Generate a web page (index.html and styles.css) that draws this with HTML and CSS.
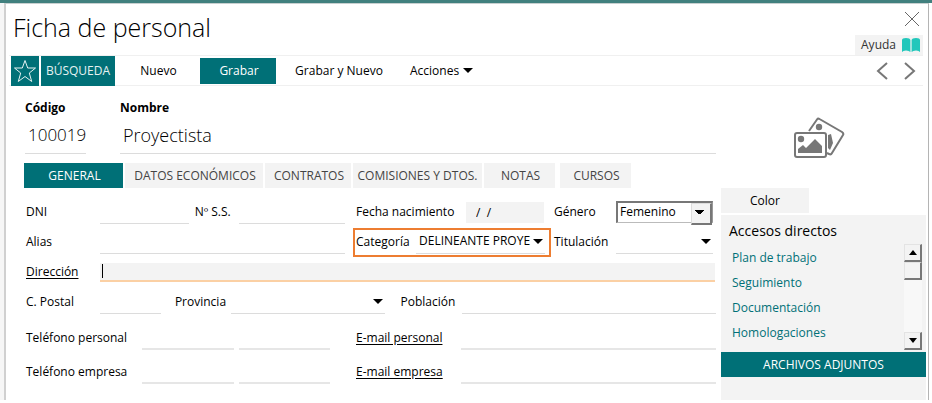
FILE: index.html
```html
<!DOCTYPE html>
<html lang="es">
<head>
    <meta charset="UTF-8">
    <title>Ficha de personal</title>
    <link rel="stylesheet" href="styles.css">
</head>
<body>
<div class="window">
    <!-- Cabecera -->
    <header class="header">
        <h1>Ficha de personal</h1>
        <div class="header-right">
            <button type="button" class="close" aria-label="Cerrar">
                <svg width="16" height="16" viewBox="0 0 16 16"><path d="M1 1L15 15M15 1L1 15"/></svg>
            </button>
            <a href="#" class="help">Ayuda
                <svg width="18" height="14" viewBox="0 0 18 14"><path d="M0 2Q0 0 4 0Q8 0 8.400 2V14Q7 12.500 4 12.500Q1 12.500 0 14ZM18 2Q18 0 14 0Q10 0 9.600 2V14Q11 12.500 14 12.500Q17 12.500 18 14Z"/></svg>
            </a>
        </div>
    </header>

    <!-- Barra de acciones -->
    <nav class="toolbar">
        <button type="button" class="star" aria-label="Favorito">
            <svg width="24" height="24" viewBox="0 0 24 24"><path d="M12 1.500L14.700 9H22.500L16.300 14L18.700 22.500L12 17.500L5.300 22.500L7.700 14L1.500 9H9.300Z"/></svg>
        </button>
        <button type="button" class="search">BÚSQUEDA</button>
        <button type="button" class="action">Nuevo</button>
        <button type="button" class="action save">Grabar</button>
        <button type="button" class="action save-new">Grabar y Nuevo</button>
        <button type="button" class="action menu">Acciones <i class="arrow"></i></button>
        <div class="pager">
            <button type="button" aria-label="Anterior"><svg width="12" height="18" viewBox="0 0 12 18"><path d="M11 1L2 9L11 17"/></svg></button>
            <button type="button" aria-label="Siguiente"><svg width="12" height="18" viewBox="0 0 12 18"><path d="M1 1L10 9L1 17"/></svg></button>
        </div>
    </nav>

    <div class="content">
        <form class="main">
            <div class="identity">
                <div class="id-field code">
                    <label for="codigo">Código</label>
                    <input type="text" id="codigo" value="100019">
                </div>
                <div class="id-field name">
                    <label for="nombre">Nombre</label>
                    <input type="text" id="nombre" value="Proyectista">
                </div>
            </div>

            <!-- Pestañas -->
            <div class="tabs">
                <button type="button" class="tab active">GENERAL</button>
                <button type="button" class="tab economic">DATOS ECONÓMICOS</button>
                <button type="button" class="tab contracts">CONTRATOS</button>
                <button type="button" class="tab fees">COMISIONES Y DTOS.</button>
                <button type="button" class="tab">NOTAS</button>
                <button type="button" class="tab last">CURSOS</button>
            </div>

            <div class="row halves">
                <div class="left">
                    <label for="dni" class="label">DNI</label>
                    <input type="text" id="dni">
                    <label for="nss" class="label-ss">Nº S.S.</label>
                    <input type="text" id="nss" class="nss">
                </div>
                <div class="right pair">
                    <div class="group">
                        <label for="fecha" class="label-date">Fecha nacimiento</label>
                        <input type="text" id="fecha" class="date" value="/  /">
                    </div>
                    <div class="group second">
                        <label for="genero" class="label-short">Género</label>
                        <span class="select boxed">
                            <select id="genero"><option>Femenino</option><option>Masculino</option></select>
                        </span>
                    </div>
                </div>
            </div>

            <div class="row halves">
                <div class="left">
                    <label for="alias" class="label">Alias</label>
                    <input type="text" id="alias">
                </div>
                <div class="right pair">
                    <div class="group marked">
                        <label for="categoria" class="label-cat">Categoría</label>
                        <span class="select">
                            <select id="categoria"><option>DELINEANTE PROYE</option></select>
                        </span>
                    </div>
                    <div class="group second">
                        <label for="titulacion" class="label-short">Titulación</label>
                        <span class="select">
                            <select id="titulacion"><option></option></select>
                        </span>
                    </div>
                </div>
            </div>

            <div class="row address">
                <label for="direccion" class="label link">Dirección</label>
                <span class="caret"><input type="text" id="direccion" class="focused"></span>
            </div>

            <div class="row place">
                <label for="cp" class="label">C. Postal</label>
                <input type="text" id="cp" class="cp">
                <label for="provincia" class="label-prov">Provincia</label>
                <span class="select prov">
                    <select id="provincia"><option></option></select>
                </span>
                <label for="poblacion" class="label-town">Población</label>
                <input type="text" id="poblacion" class="town">
            </div>

            <div class="contact">
                <div class="row halves">
                    <div class="left phones">
                        <label for="tel1" class="label-phone">Teléfono personal</label>
                        <input type="text" id="tel1">
                        <input type="text" aria-label="Teléfono personal 2">
                    </div>
                    <div class="right">
                        <label for="mail1" class="label-mail link">E-mail personal</label>
                        <input type="text" id="mail1">
                    </div>
                </div>
                <div class="row halves">
                    <div class="left phones">
                        <label for="tel2" class="label-phone">Teléfono empresa</label>
                        <input type="text" id="tel2">
                        <input type="text" aria-label="Teléfono empresa 2">
                    </div>
                    <div class="right">
                        <label for="mail2" class="label-mail link">E-mail empresa</label>
                        <input type="text" id="mail2">
                    </div>
                </div>
            </div>
        </form>

        <!-- Lateral -->
        <aside class="side">
            <div class="photo">
                <svg width="52" height="42" viewBox="0 0 52 42">
                    <g class="frame">
                        <path d="M16 14L24 2.500Q25 1 26.500 2L49 15Q51 16.500 50 18L39 36Q38 38 36 37L34 36"/>
                        <rect x="2" y="16" width="31" height="24" rx="2"/>
                    </g>
                    <circle cx="26" cy="10" r="3.200"/>
                    <circle cx="8" cy="22" r="3.200"/>
                    <path d="M5 36V32L10 28L13 31L22 22L29 29V36ZM35 18L38 17L40 26L37 33L35 31Z"/>
                </svg>
            </div>
            <button type="button" class="color">Color</button>
            <section class="shortcuts">
                <h2>Accesos directos</h2>
                <div class="list">
                    <ul>
                        <li><a href="#">Plan de trabajo</a></li>
                        <li><a href="#">Seguimiento</a></li>
                        <li><a href="#">Documentación</a></li>
                        <li><a href="#">Homologaciones</a></li>
                    </ul>
                    <div class="scrollbar">
                        <button type="button" aria-label="Subir"><i class="arrow up"></i></button>
                        <div class="thumb"></div>
                        <button type="button" class="down" aria-label="Bajar"><i class="arrow"></i></button>
                    </div>
                </div>
            </section>
            <button type="button" class="files">ARCHIVOS ADJUNTOS</button>
        </aside>
    </div>
</div>
</body>
</html>
```
FILE: styles.css
```css
* {
    box-sizing: border-box;
}
body {
    margin: 0;
    padding: 0 3px 0 0;
    border-top: 3px solid #41807e;
    background-color: #ffffff;
    font-family: "Open Sans", "Noto Sans", sans-serif;
    font-size: 12px;
    line-height: 16px;
    color: #000000;
}
button, input, select {
    font: inherit;
    color: inherit;
    margin: 0;
    padding: 0;
    border: none;
    border-radius: 0;
    background: none;
}
svg {
    display: block;
    fill: none;
}
.window {
    margin-left: 4px;
    border-left: 2px solid #d0d0d0;
    border-right: 1px solid #b4b4b4;
    border-top: 1px solid #c8d0d0;
    background-color: #ffffff;
    box-shadow: -4px 0 0 #f6f6f6;
}

/* Cabecera */
.header {
    display: flex;
    justify-content: space-between;
    height: 51px;
    padding: 0 5px 0 7px;
}
.header h1 {
    margin: 5px 0 0;
    font-size: 25px;
    line-height: 36px;
    font-weight: 300;
}
.header-right {
    display: flex;
    flex-direction: column;
    align-items: flex-end;
    justify-content: space-between;
}
.close {
    margin: 7px 3px 0 0;
}
.close path {
    stroke: #666666;
}
.help {
    display: flex;
    align-items: center;
    gap: 6px;
    height: 20px;
    padding: 0 3px 0 6px;
    background-color: #f3f3f3;
    color: #333333;
    text-decoration: none;
}
.help svg {
    fill: #22c7bb;
}

/* Barra de acciones */
.toolbar {
    display: flex;
    align-items: center;
    height: 31px;
    margin: 0 5px 0 3px;
    padding-left: 2px;
    border-top: 1px solid #f0f0f0;
    border-bottom: 1px solid #f0f0f0;
}
.star, .search {
    height: 30px;
    background-color: #007077;
    color: #e6f2f2;
}
.star {
    width: 28px;
    padding-left: 2px;
    margin-right: 2px;
}
.star path {
    stroke: #e6f2f2;
}
.search {
    width: 74px;
}
.action {
    width: 85px;
    height: 26px;
    padding-left: 2px;
}
.save {
    width: 76px;
    background-color: #007077;
    color: #ffffff;
}
.action.save-new {
    width: 124px;
}
.menu {
    display: flex;
    align-items: center;
    gap: 4px;
    padding-left: 10px;
}
.arrow {
    width: 0;
    height: 0;
    border: 5px solid transparent;
    border-top-color: #000000;
    border-bottom: none;
}
.pager {
    display: flex;
    gap: 16px;
    margin-left: auto;
    padding-right: 7px;
}
.pager path {
    stroke: #777777;
    stroke-width: 2;
}

.content {
    display: flex;
}
.main {
    flex: 1;
    min-width: 0;
    padding: 14px 5px 0 18px;
}

/* Código y nombre */
.identity {
    display: flex;
    gap: 34px;
    height: 63px;
    padding-left: 1px;
}
.id-field {
    display: flex;
    flex-direction: column;
    gap: 4px;
}
.id-field label {
    font-weight: bold;
}
.id-field input {
    height: 34px;
    width: 100%;
    padding: 0 0 4px 3px;
    border-bottom: 1px solid #dcdcdc;
    font-size: 18px;
    font-weight: 300;
}
.code {
    width: 61px;
}
.code input {
    font-size: 17px;
}
.name {
    flex: 1;
}

/* Pestañas */
.tabs {
    display: flex;
    gap: 2px;
    margin-bottom: 9px;
}
.tab {
    width: 71px;
    height: 25px;
    padding-left: 2px;
    background-color: #f3f3f3;
    color: #444444;
    white-space: nowrap;
}
.tab.active {
    width: 99px;
    background-color: #007077;
    color: #ffffff;
}
.tab.economic {
    width: 138px;
}
.tab.contracts {
    width: 86px;
}
.tab.fees {
    width: 129px;
    padding-left: 0;
}
.tab.last {
    margin-left: 3px;
}

/* Filas del formulario */
.row, .left, .right, .group {
    display: flex;
    align-items: center;
    min-width: 0;
}
.row {
    height: 30px;
    padding-left: 2px;
}
.halves {
    display: grid;
    grid-template-columns: 319fr 363fr;
    gap: 8px;
}
.pair {
    display: grid;
    grid-template-columns: 198fr 165fr;
}
.row input, .select {
    flex: 1;
    min-width: 0;
    height: 24px;
    border-bottom: 1px solid #dcdcdc;
}
.label {
    width: 74px;
}
.label-ss {
    width: 44px;
    margin-left: 6px;
}
.row .nss {
    flex: 1.2;
}
.group {
    height: 29px;
    padding: 0 7px 0 3px;
}
.group.second {
    padding: 0 3px;
}
.group.marked {
    padding: 0 4px 0 1px;
    border: 2px solid #ed7d31;
}
.label-date {
    width: 110px;
}
.row .date {
    height: 21px;
    padding-left: 10px;
    background-color: #f3f3f3;
    border: none;
    white-space: pre;
}
.label-short {
    width: 62px;
}
.label-cat {
    width: 60px;
}
.select {
    position: relative;
}
.select select {
    appearance: none;
    width: 100%;
    height: 22px;
    padding-left: 3px;
}
.select::after {
    content: "";
    position: absolute;
    right: 2px;
    top: 9px;
    border: 5px solid transparent;
    border-top-color: #000000;
    border-bottom: none;
    pointer-events: none;
}
.row .boxed {
    height: 22px;
    border: 2px solid #777777;
    border-right: 1px solid #999999;
    border-bottom: 1px solid #bbbbbb;
}
.boxed select {
    height: 18px;
    padding-left: 2px;
}
.boxed::after {
    width: 18px;
    height: 19px;
    right: 0;
    top: 0;
    border: 1px solid #dddddd;
    border-right: 2px solid #777777;
    border-bottom: 2px solid #777777;
    background: linear-gradient(#000000, #000000) 3px 6px / 9px 1px no-repeat,
        linear-gradient(#000000, #000000) 4px 7px / 7px 1px no-repeat,
        linear-gradient(#000000, #000000) 5px 8px / 5px 1px no-repeat,
        linear-gradient(#000000, #000000) 6px 9px / 3px 1px no-repeat,
        #f3f3f3;
}
.link {
    text-decoration: underline;
    text-underline-offset: 2px;
}
.address {
    padding-right: 1px;
}
.caret {
    position: relative;
    display: flex;
    flex: 1;
}
.caret::before {
    content: "";
    position: absolute;
    left: 2px;
    top: 1px;
    width: 1px;
    height: 14px;
    background-color: #000000;
}
.row .focused {
    height: 19px;
    background-color: #f3f3f3;
    border-bottom: 2px solid #fbd0a4;
}
.row .cp {
    flex: 61;
}
.label-prov {
    width: 56px;
    margin-left: 14px;
}
.prov {
    flex: 154;
}
.label-town {
    width: 61px;
    margin-left: 16px;
}
.row .town {
    flex: 255;
}
.contact {
    padding-top: 4px;
}
.contact .row {
    height: 34px;
}
.contact input {
    border-bottom: 2px solid #e6e6e6;
}
.phones {
    gap: 5px;
    padding-right: 15px;
}
.label-phone {
    width: 111px;
}
.label-mail {
    width: 105px;
    margin-left: 3px;
}

/* Lateral */
.side {
    display: flex;
    flex-direction: column;
    width: 205px;
    margin-right: 2px;
    background: linear-gradient(#ffffff 129px, #f3f3f3 129px);
}
.photo {
    height: 102px;
    padding: 31px 0 0 72px;
}
.photo svg {
    fill: #777777;
}
.photo .frame {
    fill: #ffffff;
    stroke: #777777;
    stroke-width: 2;
}
.color {
    width: 88px;
    height: 25px;
    background-color: #f3f3f3;
}
.shortcuts {
    padding: 9px 4px 2px 8px;
}
.shortcuts h2 {
    margin: 0;
    font-size: 14px;
    line-height: 18px;
    font-weight: normal;
}
.list {
    display: flex;
    justify-content: space-between;
    padding-top: 4px;
}
.list ul {
    margin: 0;
    padding: 2px 0 0 3px;
    list-style: none;
}
.list li {
    height: 25px;
    line-height: 24px;
}
.list a {
    color: #007077;
    text-decoration: none;
}
.scrollbar {
    display: flex;
    flex-direction: column;
    width: 18px;
    height: 106px;
    background-color: #f8f8f8;
}
.scrollbar button, .thumb {
    display: flex;
    align-items: center;
    justify-content: center;
    height: 18px;
    border: 1px solid #e3e3e3;
    border-right: 2px solid #777777;
    border-bottom: 2px solid #777777;
    background-color: #f3f3f3;
}
.scrollbar .arrow {
    border-width: 5px 4px 0;
}
.scrollbar .up {
    transform: rotate(180deg);
}
.scrollbar .down {
    margin-top: auto;
}
.files {
    height: 25px;
    margin-bottom: 23px;
    background-color: #007077;
    color: #ffffff;
}
```
